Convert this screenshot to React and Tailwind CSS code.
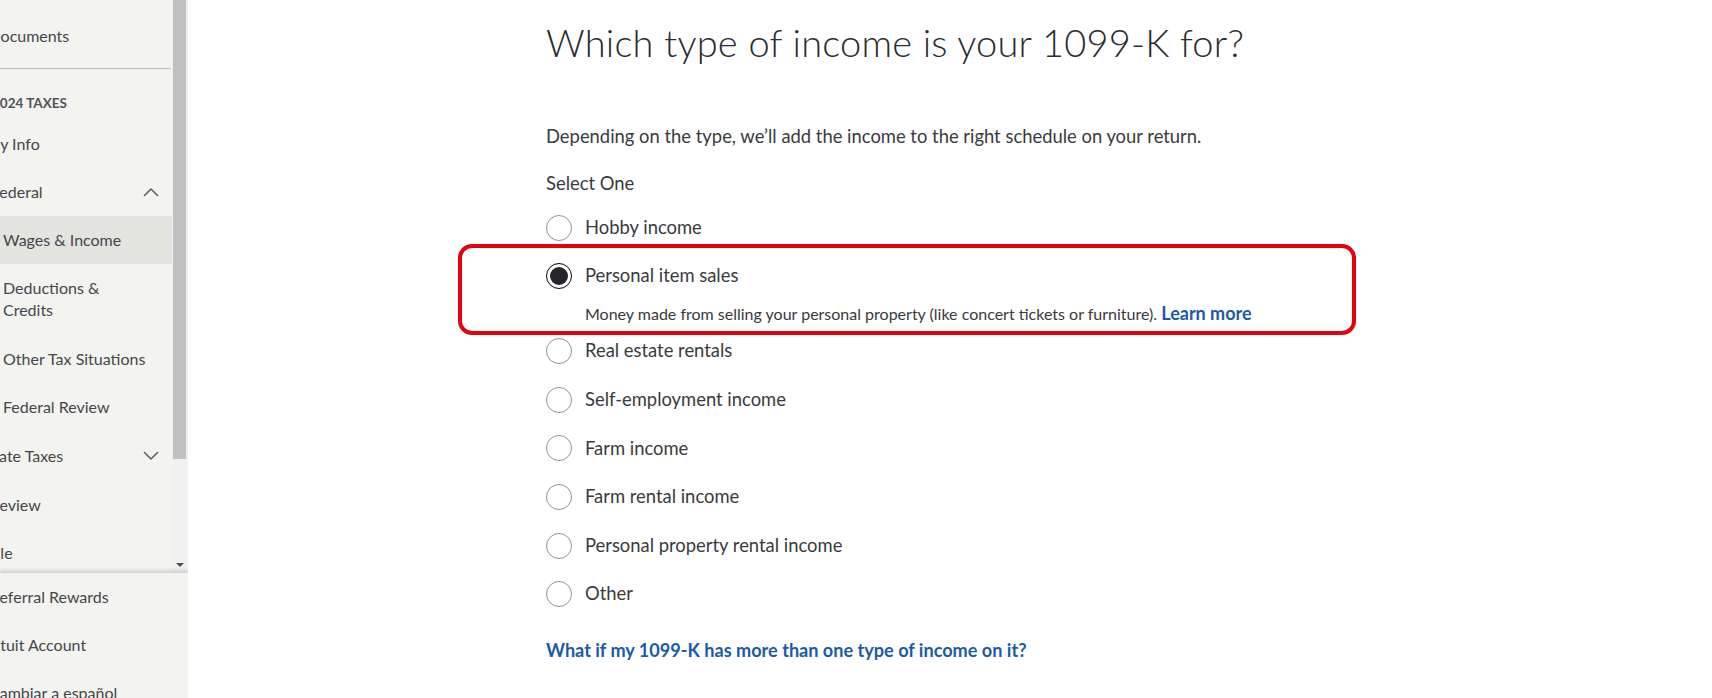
import React from "react";

const FONT = { fontFamily: "Lato, 'Noto Sans', sans-serif" };

function ChevronUp() {
  return (
    <svg width="16" height="10" viewBox="0 0 16 10" fill="none">
      <path d="M1.5 8.5 L8 2 L14.5 8.5" stroke="#5d6267" strokeWidth="1.6" strokeLinecap="round" strokeLinejoin="round" />
    </svg>
  );
}
function ChevronDown() {
  return (
    <svg width="16" height="10" viewBox="0 0 16 10" fill="none">
      <path d="M1.5 1.5 L8 8 L14.5 1.5" stroke="#5d6267" strokeWidth="1.6" strokeLinecap="round" strokeLinejoin="round" />
    </svg>
  );
}

function NavItem({ children, sub, active, chevron, off = "", h = "h-[48.5px]" }) {
  return (
    <div
      className={
        "flex items-center pr-[13px] text-[16px] text-[#43474c] whitespace-nowrap " +
        h +
        " " +
        (active ? "bg-[#e4e4df] " : "") +
        (sub ? "pl-[3px]" : "pl-0")
      }
    >
      <span className={"flex-1 " + off}>{children}</span>
      {chevron === "up" && <ChevronUp />}
      {chevron === "down" && <ChevronDown />}
    </div>
  );
}

function Radio({ checked }) {
  if (checked) {
    return (
      <div className="w-[26px] h-[26px] rounded-full border-[1.5px] border-black bg-white flex items-center justify-center shrink-0">
        <div className="w-[18px] h-[18px] rounded-full bg-[#23272b]" />
      </div>
    );
  }
  return <div className="w-[26px] h-[26px] rounded-full border border-[#8f9398] bg-white shrink-0" />;
}

function Option({ label, h = "h-[48.6px]" }) {
  return (
    <div className={"flex items-center gap-[13px] " + h}>
      <Radio />
      <span className="text-[18.4px] text-[#393a3d]">{label}</span>
    </div>
  );
}

export default function App() {
  return (
    <div className="flex h-[698px] w-[1712px] overflow-hidden bg-white" style={FONT}>
      {/* Sidebar */}
      <aside className="w-[188px] shrink-0 flex flex-col bg-[#f3f3ef] overflow-hidden">
        <div className="h-[572px] shrink-0 flex overflow-hidden">
          <div className="w-[172px] shrink-0 overflow-hidden">
            <div className="h-[12px]" />
            <NavItem off="-ml-[11.5px]" h="h-[48px]">Documents</NavItem>
            <div className="mt-[8px] h-px w-[171px] bg-[#b9bcbc]" />
            <div className="h-[22px]" />
            <div className="h-[24px] flex items-center text-[13.5px] font-bold text-[#50555a] whitespace-nowrap">
              <span className="-ml-[8px]">2024 TAXES</span>
            </div>
            <div className="h-[5px]" />
            <NavItem off="-ml-[14.5px]" h="h-[48px]">My Info</NavItem>
            <NavItem off="-ml-[9px]" chevron="up" h="h-[48px]">Federal</NavItem>
            <NavItem sub active h="h-[48px]">Wages &amp; Income</NavItem>
            <div className="pl-[3px] py-[13px] text-[16px] leading-[22px] text-[#43474c]">
              Deductions &amp;
              <br />
              Credits
            </div>
            <NavItem sub h="h-[49px]">Other Tax Situations</NavItem>
            <NavItem sub h="h-[48.5px]">Federal Review</NavItem>
            <NavItem off="-ml-[15px]" chevron="down" h="h-[49px]">State Taxes</NavItem>
            <NavItem off="-ml-[10px]" h="h-[48.5px]">Review</NavItem>
            <NavItem off="-ml-[12.5px]">File</NavItem>
          </div>
          {/* scrollbar */}
          <div className="w-[16px] shrink-0 bg-[#f0f0f0] flex flex-col items-center">
            <div className="w-[13px] h-[459px] bg-[#c1c1c1] ml-[1px] self-start" />
            <div className="flex-1" />
            <div className="mb-[5px] w-0 h-0 border-l-[4px] border-r-[4px] border-t-[4px] border-l-transparent border-r-transparent border-t-[#505050]" />
          </div>
        </div>
        <div className="flex-1 min-h-0 border-t border-[#d4d4d0] shadow-[0_-2px_3px_rgba(0,0,0,0.12)] relative">
          <div className="w-[172px] overflow-hidden">
            <NavItem off="-ml-[10px]" h="h-[48px]">Referral Rewards</NavItem>
            <NavItem off="-ml-[13px]" h="h-[48px]">Intuit Account</NavItem>
            <NavItem off="-ml-[11px]" h="h-[48px]">Cambiar a español</NavItem>
          </div>
        </div>
      </aside>

      {/* Main */}
      <main className="flex-1 pl-[358px] text-[#393a3d]">
        <h1 className="pt-[18px] text-[38px] leading-[48px] font-light text-[#2a2c2f] tracking-[0.2px]">
          Which type of income is your 1099-K for?
        </h1>
        <p className="mt-[58px] text-[18.4px] leading-[24px]">
          Depending on the type, we’ll add the income to the right schedule on your return.
        </p>
        <p className="mt-[23px] text-[18.4px] leading-[24px]">Select One</p>
        <div className="mt-[8px]">
          <Option label="Hobby income" h="h-[49px]" />
          <div className="relative">
            <div className="absolute -left-[88px] -top-[8px] w-[898px] h-[91px] border-[4px] border-[#e5000d] rounded-[14px] pointer-events-none" />
            <div className="flex items-center gap-[13px] h-[48px]">
              <Radio checked />
              <span className="text-[18.4px]">Personal item sales</span>
            </div>
            <div className="mt-[3px] pl-[39px] text-[16px] leading-[20px]">
              Money made from selling your personal property (like concert tickets or furniture).{" "}
              <a className="font-bold text-[18px] text-[#1c5aa6]">Learn more</a>
            </div>
          </div>
          <div className="h-[3px]" />
          <Option label="Real estate rentals" />
          <Option label="Self-employment income" />
          <Option label="Farm income" />
          <Option label="Farm rental income" />
          <Option label="Personal property rental income" />
          <Option label="Other" />
        </div>
        <a className="block mt-[19px] text-[18.1px] leading-[24px] font-bold text-[#1c5aa6]">
          What if my 1099-K has more than one type of income on it?
        </a>
      </main>
    </div>
  );
}
